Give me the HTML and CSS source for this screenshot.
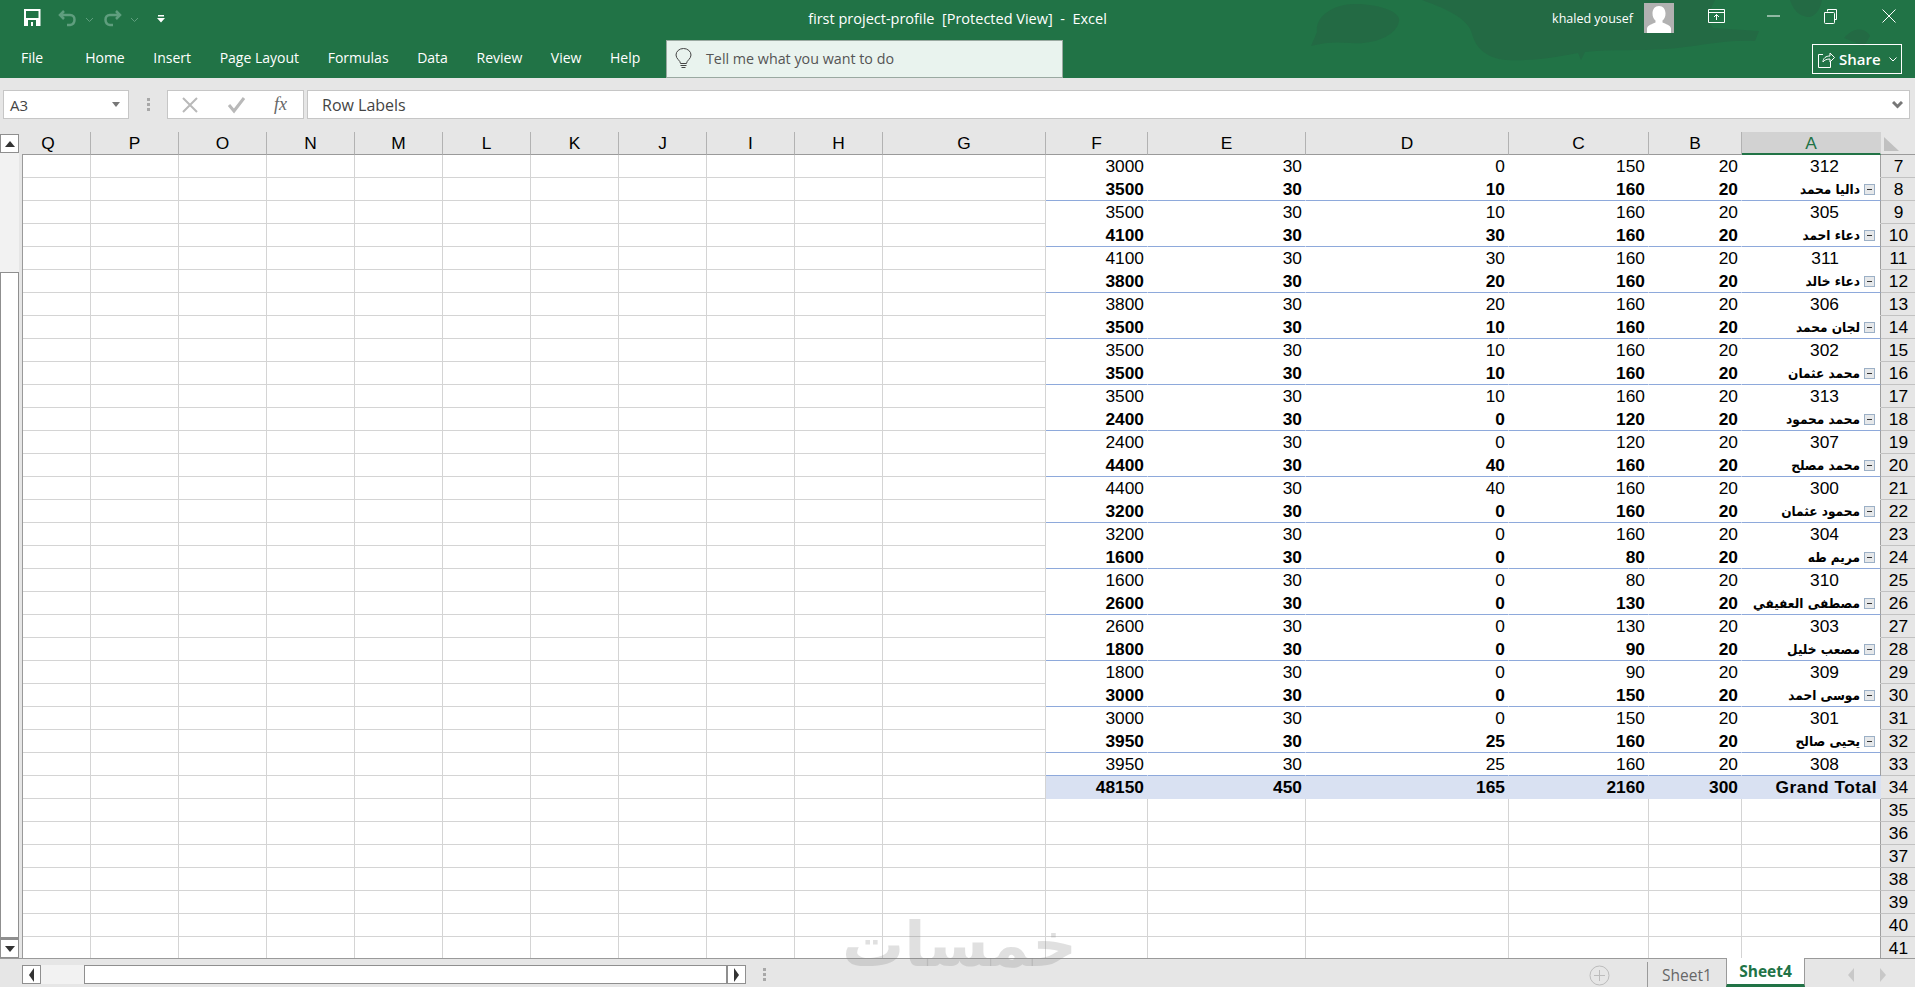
FILE: index.html
```html
<!DOCTYPE html>
<html lang="en">
<head>
<meta charset="utf-8">
<title>first project-profile - Excel</title>
<link rel="stylesheet" href="styles.css">
</head>
<body>
<header class="titlebar">
  <svg class="blobs" width="700" height="78" viewBox="0 0 700 78"><path d="M140 4c-24 0-40 14-38 28l-6 14c14-4 26-4 40-3 24 2 46-8 48-22 2-10-22-17-44-17zM207 0h293c-4 8-10 18-2 28l46 3-4 10c-30-2-60 6-90 8-30 2-50 0-80 3l-4 8-3-7c-30 6-50 8-72 7-20-2-30-12-34-26-3-14-22-24-50-34zM575 0h32c-2 12-10 20-18 16-8-2-12-10-14-16zM629 38c10-12 22-10 26-2l-6 10z"/></svg>
  <div class="topline">
    <div class="qat">
      <svg class="ico-save" width="17" height="17" viewBox="0 0 17 17"><path fill="#fff" fill-rule="evenodd" d="M0 0h16.500v17H0zM2 2v7h12.500V2zM4 11v6h8v-6zM7 13h2v4H7z"/></svg>
      <svg class="ico-undo" width="19" height="17" viewBox="0 0 19 17"><path class="fade" d="M6 1 2 5l4 4M3 5h9c6 0 6 9 0 10H9"/></svg>
      <svg class="ico-chev" width="9" height="6" viewBox="0 0 9 6"><path class="fade thin" d="m1 1 3.500 3.500L8 1"/></svg>
      <svg class="ico-redo" width="19" height="17" viewBox="0 0 19 17"><path class="fade" d="m13 1 4 4-4 4M16 5H7c-6 0-6 9 0 10h3"/></svg>
      <svg class="ico-chev" width="9" height="6" viewBox="0 0 9 6"><path class="fade thin" d="m1 1 3.500 3.500L8 1"/></svg>
      <svg class="ico-cust" width="8" height="8" viewBox="0 0 8 8"><path fill="#fff" d="M1 0h6v1.500H1zM0 3h8L4 7.500z"/></svg>
    </div>
    <div class="doc-title">first project-profile&nbsp; [Protected View]&nbsp; -&nbsp; Excel</div>
    <div class="account">
      <span class="user-name">khaled yousef</span>
      <svg class="avatar" width="30" height="30" viewBox="0 0 30 30"><rect width="30" height="30" fill="#b1b1b1"/><path fill="#fff" d="M15 3c4 0 6.500 3 6.500 7.500 0 3-1 5.500-3 7v2c3 1.500 8 2.500 8.500 6V30H3v-4.500c.5-3.500 5.500-4.500 8.500-6v-2c-2-1.500-3-4-3-7C8.500 6 11 3 15 3z"/></svg>
      <span class="winbtn first"><svg width="17" height="15" viewBox="0 0 17 15"><path class="win" d="M.5.500h16v13H.5zM.5 3.500h16M8.500 11V5.500M6 8l2.500-2.500L11 8"/></svg></span>
      <span class="winbtn"><svg width="13" height="2" viewBox="0 0 13 2"><path class="win" d="M0 1h13"/></svg></span>
      <span class="winbtn"><svg width="13" height="15" viewBox="0 0 13 15"><path class="win" d="M3.500 2.500V.5h9v10h-2M.5 3.500h9q1 0 1 1v9q0 1-1 1h-8q-1 0-1-1z"/></svg></span>
      <span class="winbtn close"><svg width="14" height="14" viewBox="0 0 14 14"><path class="win" d="m.5.500 13 13M13.500.500l-13 13"/></svg></span>
    </div>
  </div>
  <div class="ribbon">
    <nav class="tabs">
      <span class="tab file">File</span>
      <span class="tab">Home</span>
      <span class="tab">Insert</span>
      <span class="tab">Page Layout</span>
      <span class="tab">Formulas</span>
      <span class="tab">Data</span>
      <span class="tab">Review</span>
      <span class="tab">View</span>
      <span class="tab">Help</span>
    </nav>
    <div class="tellme">
      <svg width="17" height="22" viewBox="0 0 17 22"><path fill="none" stroke="#444" d="M5.500 15.500c0-3-4.500-4.500-4.500-8.500a7.500 6.500 0 0 1 15 0c0 4-4.500 5.500-4.500 8.500zM5.500 17.500h6M6.500 19.500h4"/></svg>
      <span>Tell me what you want to do</span>
    </div>
    <div class="share">
      <svg width="17" height="17" viewBox="0 0 17 17"><path fill="none" stroke="#fff" d="M5 3.500H.5v13h12V11M5 11c0-4 3-6 7-6V2l4.500 4.500L12 11V8C9 8 6 9 5 11z"/></svg>
      <b>Share</b>
      <svg width="8" height="5" viewBox="0 0 8 5"><path fill="none" stroke="#fff" d="m.5.500 3.500 3.500L7.500.500"/></svg>
    </div>
  </div>
</header>

<section class="formula">
  <div class="namebox"><span>A3</span><i class="tri-down"></i></div>
  <div class="grip"><i></i><i></i><i></i></div>
  <div class="fxbox">
    <svg width="18" height="18" viewBox="0 0 18 18"><path fill="none" stroke="#b9b9b9" stroke-width="2" d="m2 2 14 14M16 2 2 16"/></svg>
    <svg width="19" height="18" viewBox="0 0 19 18"><path fill="none" stroke="#b9b9b9" stroke-width="3" d="m2 9 5 6L17 2"/></svg>
    <em>fx</em>
  </div>
  <div class="input"><span>Row Labels</span><svg width="11" height="8" viewBox="0 0 11 8"><path fill="none" stroke="#777" stroke-width="3" d="m1 1 4.500 4.500L10 1"/></svg></div>
</section>

<main class="sheet">
  <aside class="vscroll">
    <div class="sbtn"><i class="tri-up"></i></div>
    <div class="vtrack"></div>
    <div class="vthumb"></div>
    <div class="sbtn"><i class="tri-dn"></i></div>
  </aside>
  <div class="gridwrap">
    <table class="grid">
      <colgroup><col class="c68"><col class="c88"><col class="c88"><col class="c88"><col class="c88"><col class="c88"><col class="c88"><col class="c88"><col class="c88"><col class="c88"><col class="c163"><col class="c102"><col class="c158"><col class="c203"><col class="c140"><col class="c93"><col class="c139"><col class="c34"></colgroup>
      <thead><tr><th class="cut">Q</th><th>P</th><th>O</th><th>N</th><th>M</th><th>L</th><th>K</th><th>J</th><th>I</th><th>H</th><th>G</th><th>F</th><th>E</th><th>D</th><th>C</th><th>B</th><th class="sel">A</th><th class="corner"><i></i></th></tr></thead>
      <tbody>
<tr class="pv"><td></td><td></td><td></td><td></td><td></td><td></td><td></td><td></td><td></td><td></td><td></td><td>3000</td><td>30</td><td>0</td><td>150</td><td>20</td><td class="id">312</td><th>7</th></tr>
<tr class="pv sub"><td></td><td></td><td></td><td></td><td></td><td></td><td></td><td></td><td></td><td></td><td></td><td>3500</td><td>30</td><td>10</td><td>160</td><td>20</td><td><div class="lbl"><span>داليا محمد</span><i class="pm"></i></div></td><th>8</th></tr>
<tr class="pv"><td></td><td></td><td></td><td></td><td></td><td></td><td></td><td></td><td></td><td></td><td></td><td>3500</td><td>30</td><td>10</td><td>160</td><td>20</td><td class="id">305</td><th>9</th></tr>
<tr class="pv sub"><td></td><td></td><td></td><td></td><td></td><td></td><td></td><td></td><td></td><td></td><td></td><td>4100</td><td>30</td><td>30</td><td>160</td><td>20</td><td><div class="lbl"><span>دعاء احمد</span><i class="pm"></i></div></td><th>10</th></tr>
<tr class="pv"><td></td><td></td><td></td><td></td><td></td><td></td><td></td><td></td><td></td><td></td><td></td><td>4100</td><td>30</td><td>30</td><td>160</td><td>20</td><td class="id">311</td><th>11</th></tr>
<tr class="pv sub"><td></td><td></td><td></td><td></td><td></td><td></td><td></td><td></td><td></td><td></td><td></td><td>3800</td><td>30</td><td>20</td><td>160</td><td>20</td><td><div class="lbl"><span>دعاء خالد</span><i class="pm"></i></div></td><th>12</th></tr>
<tr class="pv"><td></td><td></td><td></td><td></td><td></td><td></td><td></td><td></td><td></td><td></td><td></td><td>3800</td><td>30</td><td>20</td><td>160</td><td>20</td><td class="id">306</td><th>13</th></tr>
<tr class="pv sub"><td></td><td></td><td></td><td></td><td></td><td></td><td></td><td></td><td></td><td></td><td></td><td>3500</td><td>30</td><td>10</td><td>160</td><td>20</td><td><div class="lbl"><span>لجان محمد</span><i class="pm"></i></div></td><th>14</th></tr>
<tr class="pv"><td></td><td></td><td></td><td></td><td></td><td></td><td></td><td></td><td></td><td></td><td></td><td>3500</td><td>30</td><td>10</td><td>160</td><td>20</td><td class="id">302</td><th>15</th></tr>
<tr class="pv sub"><td></td><td></td><td></td><td></td><td></td><td></td><td></td><td></td><td></td><td></td><td></td><td>3500</td><td>30</td><td>10</td><td>160</td><td>20</td><td><div class="lbl"><span>محمد عثمان</span><i class="pm"></i></div></td><th>16</th></tr>
<tr class="pv"><td></td><td></td><td></td><td></td><td></td><td></td><td></td><td></td><td></td><td></td><td></td><td>3500</td><td>30</td><td>10</td><td>160</td><td>20</td><td class="id">313</td><th>17</th></tr>
<tr class="pv sub"><td></td><td></td><td></td><td></td><td></td><td></td><td></td><td></td><td></td><td></td><td></td><td>2400</td><td>30</td><td>0</td><td>120</td><td>20</td><td><div class="lbl"><span>محمد محمود</span><i class="pm"></i></div></td><th>18</th></tr>
<tr class="pv"><td></td><td></td><td></td><td></td><td></td><td></td><td></td><td></td><td></td><td></td><td></td><td>2400</td><td>30</td><td>0</td><td>120</td><td>20</td><td class="id">307</td><th>19</th></tr>
<tr class="pv sub"><td></td><td></td><td></td><td></td><td></td><td></td><td></td><td></td><td></td><td></td><td></td><td>4400</td><td>30</td><td>40</td><td>160</td><td>20</td><td><div class="lbl"><span>محمد مصلح</span><i class="pm"></i></div></td><th>20</th></tr>
<tr class="pv"><td></td><td></td><td></td><td></td><td></td><td></td><td></td><td></td><td></td><td></td><td></td><td>4400</td><td>30</td><td>40</td><td>160</td><td>20</td><td class="id">300</td><th>21</th></tr>
<tr class="pv sub"><td></td><td></td><td></td><td></td><td></td><td></td><td></td><td></td><td></td><td></td><td></td><td>3200</td><td>30</td><td>0</td><td>160</td><td>20</td><td><div class="lbl"><span>محمود عثمان</span><i class="pm"></i></div></td><th>22</th></tr>
<tr class="pv"><td></td><td></td><td></td><td></td><td></td><td></td><td></td><td></td><td></td><td></td><td></td><td>3200</td><td>30</td><td>0</td><td>160</td><td>20</td><td class="id">304</td><th>23</th></tr>
<tr class="pv sub"><td></td><td></td><td></td><td></td><td></td><td></td><td></td><td></td><td></td><td></td><td></td><td>1600</td><td>30</td><td>0</td><td>80</td><td>20</td><td><div class="lbl"><span>مريم طه</span><i class="pm"></i></div></td><th>24</th></tr>
<tr class="pv"><td></td><td></td><td></td><td></td><td></td><td></td><td></td><td></td><td></td><td></td><td></td><td>1600</td><td>30</td><td>0</td><td>80</td><td>20</td><td class="id">310</td><th>25</th></tr>
<tr class="pv sub"><td></td><td></td><td></td><td></td><td></td><td></td><td></td><td></td><td></td><td></td><td></td><td>2600</td><td>30</td><td>0</td><td>130</td><td>20</td><td><div class="lbl"><span>مصطفى العفيفي</span><i class="pm"></i></div></td><th>26</th></tr>
<tr class="pv"><td></td><td></td><td></td><td></td><td></td><td></td><td></td><td></td><td></td><td></td><td></td><td>2600</td><td>30</td><td>0</td><td>130</td><td>20</td><td class="id">303</td><th>27</th></tr>
<tr class="pv sub"><td></td><td></td><td></td><td></td><td></td><td></td><td></td><td></td><td></td><td></td><td></td><td>1800</td><td>30</td><td>0</td><td>90</td><td>20</td><td><div class="lbl"><span>مصعب خليل</span><i class="pm"></i></div></td><th>28</th></tr>
<tr class="pv"><td></td><td></td><td></td><td></td><td></td><td></td><td></td><td></td><td></td><td></td><td></td><td>1800</td><td>30</td><td>0</td><td>90</td><td>20</td><td class="id">309</td><th>29</th></tr>
<tr class="pv sub"><td></td><td></td><td></td><td></td><td></td><td></td><td></td><td></td><td></td><td></td><td></td><td>3000</td><td>30</td><td>0</td><td>150</td><td>20</td><td><div class="lbl"><span>موسى احمد</span><i class="pm"></i></div></td><th>30</th></tr>
<tr class="pv"><td></td><td></td><td></td><td></td><td></td><td></td><td></td><td></td><td></td><td></td><td></td><td>3000</td><td>30</td><td>0</td><td>150</td><td>20</td><td class="id">301</td><th>31</th></tr>
<tr class="pv sub"><td></td><td></td><td></td><td></td><td></td><td></td><td></td><td></td><td></td><td></td><td></td><td>3950</td><td>30</td><td>25</td><td>160</td><td>20</td><td><div class="lbl"><span>يحيى صالح</span><i class="pm"></i></div></td><th>32</th></tr>
<tr class="pv last"><td></td><td></td><td></td><td></td><td></td><td></td><td></td><td></td><td></td><td></td><td></td><td>3950</td><td>30</td><td>25</td><td>160</td><td>20</td><td class="id">308</td><th>33</th></tr>
<tr class="total"><td></td><td></td><td></td><td></td><td></td><td></td><td></td><td></td><td></td><td></td><td></td><td>48150</td><td>450</td><td>165</td><td>2160</td><td>300</td><td class="gt">Grand Total</td><th>34</th></tr>
<tr><td></td><td></td><td></td><td></td><td></td><td></td><td></td><td></td><td></td><td></td><td></td><td></td><td></td><td></td><td></td><td></td><td></td><th>35</th></tr>
<tr><td></td><td></td><td></td><td></td><td></td><td></td><td></td><td></td><td></td><td></td><td></td><td></td><td></td><td></td><td></td><td></td><td></td><th>36</th></tr>
<tr><td></td><td></td><td></td><td></td><td></td><td></td><td></td><td></td><td></td><td></td><td></td><td></td><td></td><td></td><td></td><td></td><td></td><th>37</th></tr>
<tr><td></td><td></td><td></td><td></td><td></td><td></td><td></td><td></td><td></td><td></td><td></td><td></td><td></td><td></td><td></td><td></td><td></td><th>38</th></tr>
<tr><td></td><td></td><td></td><td></td><td></td><td></td><td></td><td></td><td></td><td></td><td></td><td></td><td></td><td></td><td></td><td></td><td></td><th>39</th></tr>
<tr><td></td><td></td><td></td><td></td><td></td><td></td><td></td><td></td><td></td><td></td><td></td><td></td><td></td><td></td><td></td><td></td><td></td><th>40</th></tr>
<tr><td></td><td></td><td></td><td></td><td></td><td></td><td></td><td></td><td></td><td></td><td></td><td></td><td></td><td></td><td></td><td></td><td></td><th>41</th></tr>
      </tbody>
    </table>
  </div>
</main>

<footer class="statusbar">
  <div class="sbtn h"><i class="tri-lf"></i></div>
  <div class="htrack"></div>
  <div class="hthumb"></div>
  <div class="sbtn h"><i class="tri-rt"></i></div>
  <div class="grip small"><i></i><i></i><i></i></div>
  <svg class="plus" width="21" height="21" viewBox="0 0 21 21"><circle cx="10.500" cy="10.500" r="9.500" fill="none" stroke="#bcbcbc"/><path stroke="#bcbcbc" d="M10.500 5v11M5 10.500h11"/></svg>
  <div class="sheet-tab">Sheet1</div>
  <div class="sheet-tab active">Sheet4</div>
  <i class="nav-left"></i>
  <i class="nav-right"></i>
</footer>
<div class="watermark">خمسات</div>
</body>
</html>
```
FILE: styles.css
```css
* { box-sizing: border-box; }
html, body { margin: 0; padding: 0; }
body { width: 1915px; height: 987px; overflow: hidden; background: #e6e6e6; position: relative; font-family: "Open Sans", "Noto Sans", sans-serif; color: #444; }
i { display: block; }

/* title bar */
.titlebar { height: 78px; background: #217346; color: #fff; position: relative; }
.blobs { position: absolute; right: 0; top: 0; fill: #236a44; }
.topline { display: grid; grid-template-columns: 1fr auto 1fr; height: 40px; position: relative; }
.qat { display: flex; align-items: flex-start; padding: 9px 0 0 24px; }
.ico-undo { margin: 1px 0 0 17px; }
.ico-redo { margin: 1px 0 0 9px; }
.ico-chev { margin: 8px 0 0 8px; }
.ico-cust { margin: 6px 0 0 18px; }
.fade { fill: none; stroke: #5f9e7e; stroke-width: 2.5; }
.fade.thin { stroke-width: 1; }
.doc-title { font-size: 14.5px; line-height: 38px; white-space: nowrap; }
.account { display: flex; justify-content: flex-end; align-items: flex-start; }
.user-name { font-size: 12.500px; line-height: 37px; margin-right: 11px; }
.avatar { margin-top: 3px; }
.winbtn { width: 57px; height: 32px; display: flex; align-items: center; justify-content: center; }
.winbtn.first { margin-left: 14px; }
.winbtn.close { width: 56px; padding-left: 4px; }
.win { fill: none; stroke: #fff; }
.ribbon { display: flex; align-items: flex-start; position: relative; height: 38px; padding-right: 13px; }
.tabs { display: flex; font-size: 14px; line-height: 36px; width: 666px; padding-left: 21px; flex: none; }
.tab { margin-right: 28.6px; white-space: nowrap; }
.tab.file { margin-right: 42px; }
.tellme { width: 397px; height: 38px; display: flex; align-items: center; gap: 14px; padding-left: 8px; background: #e9f3ee; border: 1px solid #9aa9a1; color: #555; font-size: 14.3px; line-height: 18px; padding-bottom: 1px; }
.share { margin-left: auto; margin-top: 4px; width: 90px; height: 30px; border: 1px solid #fff; display: flex; align-items: center; padding-left: 5px; gap: 4px; font-size: 15px; }
.share b { font-weight: 600; }
.share svg:last-child { margin-left: 4px; }

/* formula bar */
.formula { height: 54px; display: flex; padding: 12px 5px 13px 3px; background: #e6e6e6; }
.namebox, .fxbox, .input { background: #fff; border: 1px solid #c6c6c6; height: 29px; display: flex; align-items: center; font-size: 15px; color: #444; }
.namebox { width: 126px; padding: 0 8px 0 6px; justify-content: space-between; }
.tri-down { width: 0; height: 0; border: 4px solid transparent; border-top: 5px solid #777; border-bottom: 0; }
.grip { display: flex; flex-direction: column; gap: 2px; width: 38px; align-items: center; padding-top: 8px; }
.grip i { width: 3px; height: 3px; background: #a8a8a8; }
.fxbox { width: 137px; padding-left: 13px; gap: 28px; }
.fxbox em { font: italic 18px "Liberation Serif", serif; color: #666; margin-left: 0; }
.input { flex: 1; margin-left: 3px; padding: 0 6px 0 14px; justify-content: space-between; font-size: 16px; }

/* sheet */
.sheet { height: 826px; display: flex; background: #e6e6e6; overflow: hidden; }
.vscroll { width: 19px; display: flex; flex-direction: column; padding-top: 2px; margin-right: 3px; flex: none; height: 826px; }
.sbtn { width: 19px; height: 19px; background: #fff; border: 1px solid #8f8f8f; display: flex; align-items: center; justify-content: center; flex: none; }
.vtrack { height: 119px; background: #f2f2f2; flex: none; }
.vthumb { flex: 1; background: #fff; border: 1px solid #8f8f8f; border-bottom-width: 2px; }
.tri-up, .tri-dn, .tri-lf, .tri-rt { width: 0; height: 0; border: 5px solid transparent; }
.tri-up { border-bottom: 6px solid #333; border-top: 0; }
.tri-dn { border-top: 6px solid #333; border-bottom: 0; }
.tri-lf { border-right: 5px solid #333; border-left: 0; border-width: 7px 5px 7px 0; }
.tri-rt { border-left: 5px solid #333; border-right: 0; border-width: 7px 0 7px 5px; }
.gridwrap { flex: 1; overflow: hidden; background: linear-gradient(#e6e6e6 22px, #9a9a9a 22px) 0 0 / 1px 100% no-repeat; padding-left: 1px; }
.grid { table-layout: fixed; border-collapse: separate; border-spacing: 0; width: 1892px; font: 17.33px/21px "Liberation Sans", Arial, sans-serif; color: #000; }
.c34 { width: 34px; } .c68 { width: 68px; } .c88 { width: 88px; } .c93 { width: 93px; } .c102 { width: 102px; } .c139 { width: 139px; } .c140 { width: 140px; } .c158 { width: 158px; } .c163 { width: 163px; } .c203 { width: 203px; }
.grid tr { height: 23px; }
.grid td { height: 23px; padding: 0 3px 0 0; text-align: right; white-space: nowrap; overflow: hidden; background: #fff; border-right: 1px solid #d4d4d4; border-bottom: 1px solid #d4d4d4; }
.grid th { height: 23px; padding: 0; font-weight: 400; background: #e6e6e6; overflow: hidden; white-space: nowrap; }
.grid thead th { border-right: 1px solid #b2b2b2; border-bottom: 1px solid #9a9a9a; }
.grid thead th.cut { padding-right: 17px; }
.grid thead th.sel { background: #d2d2d2; color: #217346; border-right-color: #d2d2d2; border-bottom: 2px solid #217346; line-height: 20px; }
.grid thead th.corner { border-right: 0; padding: 5px 0 2px 3px; vertical-align: top; }
.corner i { width: 15px; height: 14px; background: #c0c0c0; clip-path: polygon(100% 100%, 0 100%, 0 0); }
.grid tbody th { border-bottom: 1px solid #c2c2c2; padding-left: 1px; }
.grid td:nth-child(17) { border-right-color: #9f9f9f; }
.pv td:nth-child(n+12):nth-child(-n+16) { border-color: transparent; }
.pv td:nth-child(17) { border-bottom-color: transparent; }
.sub td:nth-child(n+12):nth-child(-n+17) { border-bottom-color: #8ea9db; font-weight: 700; }
.last td:nth-child(n+12):nth-child(-n+17) { border-bottom-color: #8ea9db; }
.grid td.id { padding-right: 41px; }
.lbl { display: flex; justify-content: flex-end; align-items: center; gap: 4px; height: 21px; padding-right: 2px; font-size: 13.5px; line-height: 20px; }
.lbl span { font-family: "DejaVu Sans Condensed", "DejaVu Sans", sans-serif; }
.pm { width: 11px; height: 11px; border: 1px solid #9cb0c6; background: linear-gradient(#333, #333) center / 5px 1px no-repeat, #e6e8ea; flex: none; }
.total td:nth-child(n+12):nth-child(-n+17) { background: #d9e1f2; font-weight: 700; border-color: #d9e1f2; }
.total td:nth-child(17) { border-right-color: #9f9f9f; }
.grid td.gt { padding-right: 3px; letter-spacing: .5px; }

/* bottom bar */
.statusbar { height: 29px; border-top: 1px solid #9a9a9a; display: flex; align-items: flex-start; padding: 6px 0 0 22px; background: #e6e6e6; position: relative; }
.sbtn.h { height: 19px; width: 19px; }
.htrack { width: 43px; height: 19px; background: #f2f2f2; }
.hthumb { width: 643px; height: 19px; background: #fff; border: 1px solid #8f8f8f; }
.grip.small { width: 36px; padding-top: 3px; }
.plus { margin-left: 807px; margin-right: 37px; }
.sheet-tab { width: 79px; height: 25px; margin-top: -3px; font-size: 15.5px; color: #666; display: flex; align-items: center; justify-content: center; border-left: 1px solid #9a9a9a; }
.sheet-tab.active { height: 29px; margin-top: -7px; background: #fff; color: #217346; font-weight: 700; border-right: 1px solid #9a9a9a; border-bottom: 3px solid #217346; }
.nav-left, .nav-right { width: 0; height: 0; border: 7px solid transparent; margin-top: 3px; }
.nav-left { border-right: 6px solid #c8c8c8; border-left: 0; margin-left: 43px; }
.nav-right { border-left: 6px solid #c8c8c8; border-right: 0; margin-left: 26px; }

/* watermark over the sheet */
.watermark { position: absolute; left: 842px; top: 910px; width: 230px; text-align: center; font: 700 62px/70px "DejaVu Sans", sans-serif; color: rgba(130, 130, 130, .25); pointer-events: none; }
```
